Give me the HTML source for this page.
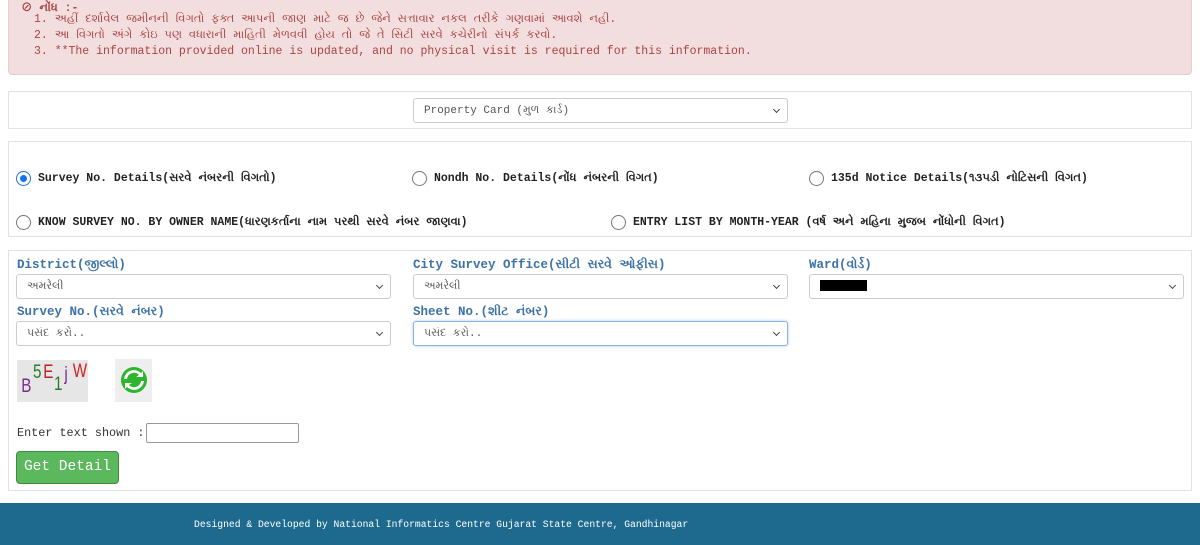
<!DOCTYPE html>
<html><head><meta charset="utf-8"><style>
*{box-sizing:border-box;margin:0;padding:0}
body{width:1200px;height:545px;background:#fff;position:relative;overflow:hidden;font-family:"Liberation Mono","Noto Sans CJK SC",monospace;}
.abs{position:absolute}
.alert{left:8px;top:-6px;width:1184px;height:81px;background:#f2dede;border:1px solid #ebccd1;border-radius:4px;color:#a94442;font-size:11.5px}
.panel{position:absolute;left:8px;width:1184px;border:1px solid #e3e3e3;background:#fff}
.sel{position:absolute;height:25px;border:1px solid #ccc;border-radius:3px;background:#fff;font-size:11px;color:#555;padding:6px 10px 0;white-space:nowrap}
.sel:after{content:"";position:absolute;right:8px;top:8px;width:4px;height:4px;border-right:1.3px solid #444;border-bottom:1.3px solid #444;transform:rotate(45deg)}
.rad{position:absolute;font-size:11.5px;font-weight:bold;color:#222;white-space:nowrap}
.rad i{position:absolute;left:-22px;top:-1px;width:15px;height:15px;border:1px solid #777;border-radius:50%}
.rad i.on{border:1.5px solid #1a73e8}
.rad i.on:after{content:"";position:absolute;left:2.5px;top:2.5px;width:7px;height:7px;border-radius:50%;background:#1a73e8}
.lbl{position:absolute;font-size:12.5px;font-weight:bold;color:#3c72a6}
</style></head><body>
<div class="abs alert">
<div class="abs" style="left:12px;top:4px;font-weight:bold">⊘ નોંધ :-</div>
<div class="abs" style="left:25px;top:17px;line-height:16px;white-space:nowrap">1. અહીં દર્શાવેલ જમીનની વિગતો ફક્ત આપની જાણ માટે જ છે જેને સત્તાવાર નકલ તરીકે ગણવામાં આવશે નહી.<br>2. આ વિગતો અંગે કોઇ પણ વધારાની માહિતી મેળવવી હોય તો જે તે સિટી સરવે કચેરીનો સંપર્ક કરવો.<br>3. **The information provided online is updated, and no physical visit is required for this information.</div>
</div>
<div class="panel" style="top:91px;height:38px"></div>
<div class="sel" style="left:413px;top:98px;width:375px">Property Card (મુળ કાર્ડ)</div>

<div class="panel" style="top:141px;height:96px"></div>
<div class="rad" style="left:38px;top:172px"><i class="on"></i>Survey No. Details(સરવે નંબરની વિગતો)</div>
<div class="rad" style="left:434px;top:172px"><i></i>Nondh No. Details(નોંધ નંબરની વિગત)</div>
<div class="rad" style="left:831px;top:172px"><i></i>135d Notice Details(૧૩૫ડી નોટિસની વિગત)</div>
<div class="rad" style="left:38px;top:216px"><i></i>KNOW SURVEY NO. BY OWNER NAME(ધારણકર્તાના નામ પરથી સરવે નંબર જાણવા)</div>
<div class="rad" style="left:633px;top:216px"><i></i>ENTRY LIST BY MONTH-YEAR (વર્ષ અને મહિના મુજબ નોંધોની વિગત)</div>

<div class="panel" style="top:250px;height:241px"></div>
<div class="lbl" style="left:17px;top:258px">District(જીલ્લો)</div>
<div class="lbl" style="left:413px;top:258px">City Survey Office(સીટી સરવે ઓફીસ)</div>
<div class="lbl" style="left:809px;top:258px">Ward(વોર્ડ)</div>
<div class="sel" style="left:16px;top:274px;width:375px">અમરેલી</div>
<div class="sel" style="left:413px;top:274px;width:375px">અમરેલી</div>
<div class="sel" style="left:809px;top:274px;width:375px;padding-top:5px"><span style="display:inline-block;width:47px;height:11px;background:#000"></span></div>
<div class="lbl" style="left:17px;top:305px">Survey No.(સરવે નંબર)</div>
<div class="lbl" style="left:413px;top:305px">Sheet No.(શીટ નંબર)</div>
<div class="sel" style="left:16px;top:321px;width:375px">પસંદ કરો..</div>
<div class="sel" style="left:413px;top:321px;width:375px;border-color:#8cb4e0;box-shadow:0 0 3px #aac8ee">પસંદ કરો..</div>

<div class="abs" style="left:17px;top:360px;width:71px;height:42px;background:#e6e6e6;font-family:'Liberation Sans',sans-serif;font-size:19px;overflow:hidden">
<span class="abs" style="left:3px;top:16px;color:#7a2a8a;transform:scaleX(.8)">B</span>
<span class="abs" style="left:15px;top:2px;color:#2a7a2a;transform:scaleX(.8)">5</span>
<span class="abs" style="left:25px;top:2px;color:#c02020;transform:scaleX(.8)">E</span>
<span class="abs" style="left:36px;top:14px;color:#2a7a2a;transform:scaleX(.8)">1</span>
<span class="abs" style="left:47px;top:4px;color:#7a2a8a;transform:scaleX(.8)">j</span>
<span class="abs" style="left:54px;top:1px;color:#d02020;transform:scaleX(.8)">W</span>
</div>
<div class="abs" style="left:115px;top:359px;width:37px;height:43px;background:#eee">
<svg width="37" height="43" viewBox="0 0 37 43"><circle cx="19" cy="21" r="13" fill="#2db52d"/><path d="M12 20a7 7 0 0 1 12-4l-3 2h7v-6l-2 2a10 10 0 0 0-17 6z" fill="#fff"/><path d="M26 22a7 7 0 0 1-12 4l3-2h-7v6l2-2a10 10 0 0 0 17-6z" fill="#fff"/></svg>
</div>
<div class="abs" style="left:17px;top:426px;font-size:11.8px;color:#333">Enter text shown :</div>
<div class="abs" style="left:146px;top:423px;width:153px;height:20px;border:1px solid #999;border-radius:2px"></div>
<div class="abs" style="left:16px;top:451px;width:103px;height:33px;background:#5cb85c;border:1px solid #3d8b3d;border-radius:4px;color:#fff;font-size:14.5px;text-align:center;line-height:31px">Get Detail</div>

<div class="abs" style="left:0;top:503px;width:1200px;height:42px;background:#1d6a8e;color:#fff;font-size:9.7px;padding:16px 0 0 194px">Designed &amp; Developed by National Informatics Centre Gujarat State Centre, Gandhinagar</div>
</body></html>
